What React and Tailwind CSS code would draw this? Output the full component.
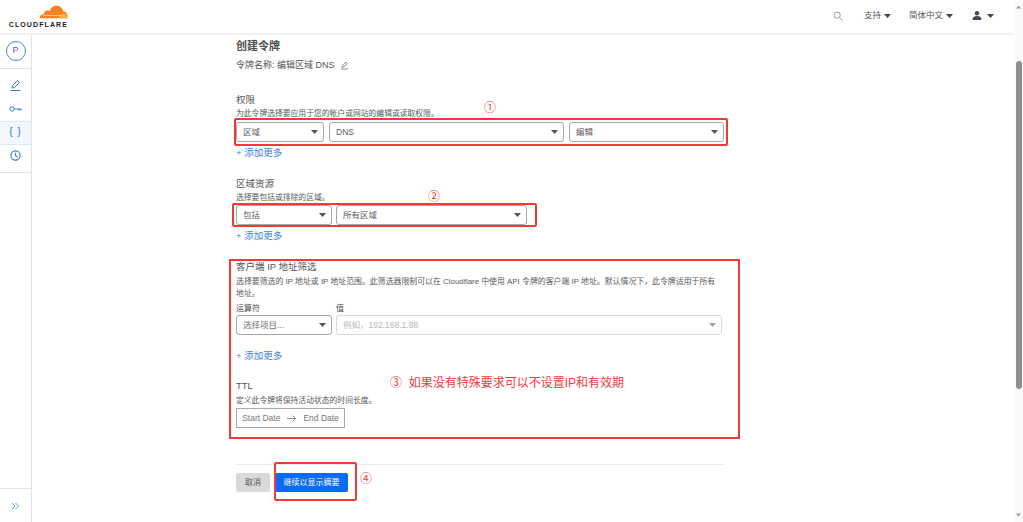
import React from "react";

const font = { fontFamily: '"Liberation Sans","Noto Sans CJK SC",sans-serif' };

function Caret({ className = "" }) {
  return (
    <svg width="7" height="4" viewBox="0 0 7 4" className={className}>
      <path d="M0 0h7L3.5 4z" fill="currentColor" />
    </svg>
  );
}

function Select({ w, label, disabled, muted }) {
  return (
    <div
      className={`${w} h-5 rounded-[3px] border flex items-center justify-between pl-[5px] pr-[5px] shrink-0 ${
        disabled ? "border-[#d9d9d9]" : "border-[#a8a8a8]"
      }`}
    >
      <span className={`text-[8.5px] ${disabled ? "text-[#b4b4b4] pl-[1px]" : muted ? "text-[#6f6f6f] pl-[1px]" : "text-[#5c5c5c] pl-[1px]"}`}>{label}</span>
      <Caret className={disabled ? "text-[#a0a0a0]" : "text-[#555555]"} />
    </div>
  );
}

function AddMore({ className = "" }) {
  return <div className={`h-3 leading-3 text-[9.5px] text-[#3d82d6] ${className}`}>+ 添加更多</div>;
}

function Heading({ children, className = "" }) {
  return <div className={`h-3 leading-3 text-[9.5px] text-[#555555] ${className}`}>{children}</div>;
}

function Desc({ children, className = "" }) {
  return <div className={`h-[10px] leading-[10px] text-[7.8px] text-[#5a5a5a] whitespace-nowrap ${className}`}>{children}</div>;
}

function Logo() {
  return (
    <div className="flex flex-col items-end w-[60px] mt-[3px]">
      <svg width="29" height="14" viewBox="0 0 30 14">
        <path d="M0.5 13.5c.2-2.600 2-4.200 4.500-4.400C6 5 9.500 4.600 11 6c1-3.800 4.500-6 8-5.500 3 .4 5.400 2.600 6 5.600 2.400.2 4.200 1.600 4.500 4.200.1 1.100 0 2.200-.2 3.200z" fill="#f6821f" />
        <path d="M21 13.500c.5-2 1.100-3.800 3-4.600 1.500-.6 3.500-.2 5 .6.4 1.300.5 2.700.3 4z" fill="#fbad41" />
        <path d="M4 10.700h19" stroke="#fff" strokeWidth=".6" />
      </svg>
      <div className="text-[7px] font-bold tracking-[1.1px] leading-[8px] text-[#222222] mt-[2px] whitespace-nowrap">CLOUDFLARE</div>
    </div>
  );
}

function NavIcon({ children, active }) {
  return (
    <div className={`h-[23.5px] flex items-center justify-center ${active ? "bg-[#f3f7fd] border-y border-[#dbe7f6]" : ""}`}>
      {children}
    </div>
  );
}

function Overlay({ className }) {
  return <div className={`absolute border-2 border-[#f03a3a] ${className}`} />;
}

function Mark({ className, children }) {
  return <div className={`absolute text-[#ef3b3b] text-[12px] leading-[14px] whitespace-nowrap ${className}`}>{children}</div>;
}

export default function App() {
  return (
    <div style={font} className="relative h-[522px] w-[1023px] overflow-hidden bg-white flex">
      <div className="flex-1 flex flex-col min-w-0">
        <header className="h-[35px] shrink-0 border-b-2 border-[#f1f1f1] flex items-center pr-[20px] pl-[8px] pb-[2px]">
          <Logo />
          <div className="flex-1" />
          <svg width="10" height="10" viewBox="0 0 24 24" fill="none" stroke="#8a8a8a" strokeWidth="2" className="mr-[21px]">
            <circle cx="10" cy="10" r="7.500" />
            <path d="M16 16l7 7" />
          </svg>
          <span className="text-[8.5px] text-[#555555]">支持</span>
          <Caret className="text-[#444444] ml-[3px] mr-[18px]" />
          <span className="text-[8.5px] text-[#555555]">简体中文</span>
          <Caret className="text-[#444444] ml-[3px] mr-[19px]" />
          <svg width="10" height="9" viewBox="0 0 10 9" className="mr-[5px]">
            <circle cx="5" cy="2.200" r="2.200" fill="#444a55" />
            <path d="M0.500 9c0-3 1.500-4 4.500-4s4.500 1 4.500 4z" fill="#444a55" />
          </svg>
          <Caret className="text-[#444444]" />
        </header>

        <div className="flex-1 flex min-h-0">
          <aside className="w-[32px] shrink-0 border-r border-[#e3e3e3] flex flex-col">
            <div className="h-[34px] border-b border-[#e3e3e3] flex items-center justify-center pb-[1px]">
              <div className="w-[20px] h-[20px] rounded-full border border-[#4c86d8] flex items-center justify-center text-[9px] text-[#3f6fb5]">P</div>
            </div>
            <div className="pt-[5px] border-b border-[#e3e3e3] pb-[5px] h-[104px]">
              <NavIcon>
                <svg width="13" height="13" viewBox="0 0 13 13" fill="none" stroke="#3d7bd0" strokeWidth="1">
                  <path d="M3 9l.5-2.500L8.500 1.500l2 2-5 5z" />
                  <path d="M1.500 11.500h10" />
                </svg>
              </NavIcon>
              <NavIcon>
                <svg width="13" height="8" viewBox="0 0 13 8" fill="none" stroke="#3d7bd0" strokeWidth="1">
                  <circle cx="3" cy="4" r="2.200" />
                  <path d="M5.200 4h7.300M10 4v2M12 4v1.500" />
                </svg>
              </NavIcon>
              <NavIcon active>
                <span className="text-[10px] font-medium text-[#2f6fc9] tracking-[1px] -mt-[2px]">{"{ }"}</span>
              </NavIcon>
              <NavIcon>
                <svg width="11" height="11" viewBox="0 0 11 11" fill="none" stroke="#3d7bd0" strokeWidth="1.100" className="-mt-[2px]">
                  <circle cx="5.500" cy="5.500" r="4.600" />
                  <path d="M5.500 2.800v3l2 1.200" />
                </svg>
              </NavIcon>
            </div>
            <div className="flex-1" />
            <div className="h-[34px] border-t border-[#e3e3e3] flex items-center justify-center">
              <svg width="9" height="8" viewBox="0 0 9 8" fill="none" stroke="#6d9fe6" strokeWidth="1">
                <path d="M1 1l3 3-3 3M4.500 1l3 3-3 3" />
              </svg>
            </div>
          </aside>

          <main className="flex-1 pl-[204px] min-w-0">
            <div className="w-[488px]">
              <div className="mt-[4px] h-[14px] leading-[14px] text-[11px] font-semibold text-[#4d4d4d]">创建令牌</div>
              <div className="mt-[6px] h-3 leading-3 text-[9px] text-[#555555] flex items-center gap-[5px]">
                令牌名称: 编辑区域 DNS
                <svg width="9" height="9" viewBox="0 0 13 13" fill="none" stroke="#555555" strokeWidth="1">
                  <path d="M3 9l.5-2.500L8.500 1.500l2 2-5 5z" />
                  <path d="M1.500 11.500h10" />
                </svg>
              </div>

              <Heading className="mt-[23px]">权限</Heading>
              <Desc className="mt-[3px]">为此令牌选择要应用于您的帐户或网站的编辑或读取权限。</Desc>
              <div className="mt-[3px] flex gap-[5px]">
                <Select w="w-[88px]" label="区域" />
                <Select w="w-[235px]" label="DNS" />
                <Select w="w-[155px]" label="编辑" />
              </div>
              <AddMore className="mt-[5px]" />

              <Heading className="mt-[19px]">区域资源</Heading>
              <Desc className="mt-[3px]">选择要包括或排除的区域。</Desc>
              <div className="mt-[2px] flex gap-[4px]">
                <Select w="w-[96px]" label="包括" />
                <Select w="w-[191px]" label="所有区域" />
              </div>
              <AddMore className="mt-[5px]" />

              <Heading className="mt-[19px]">客户端 IP 地址筛选</Heading>
              <Desc className="mt-[3px] !whitespace-normal !leading-[12px] h-[24px] pr-[6px] !text-[7.9px]">
                选择要筛选的 IP 地址或 IP 地址范围。此筛选器限制可以在 Cloudflare 中使用 API 令牌的客户端 IP 地址。默认情况下，此令牌适用于所有地址。
              </Desc>
              <div className="flex mt-[4px] text-[8px] text-[#4d4d4d] h-[10px] leading-[10px]">
                <div className="w-[100px]">运算符</div>
                <div>值</div>
              </div>
              <div className="mt-[1px] flex gap-[4px]">
                <Select w="w-[96px]" label="选择项目..." muted />
                <Select w="w-[386px]" label="例如，192.168.1.88" disabled />
              </div>
              <AddMore className="mt-[15px]" />

              <Heading className="mt-[18px]">TTL</Heading>
              <Desc className="mt-[4px]">定义此令牌将保持活动状态的时间长度。</Desc>
              <div className="mt-[2px] w-[109px] h-[20px] border border-[#a8a8a8] flex items-center justify-center gap-[7px] text-[8.5px] text-[#777777] whitespace-nowrap">
                <span>Start Date</span>
                <svg width="9" height="7" viewBox="0 0 9 7" fill="none" stroke="#777777" strokeWidth=".8">
                  <path d="M0 3.500h8.500M5.500 .5l3 3-3 3" />
                </svg>
                <span>End Date</span>
              </div>

              <div className="mt-[36px] border-t border-[#ececec]" />
              <div className="mt-[8px] flex gap-[5px]">
                <div className="w-[34px] h-[19px] rounded-[2px] bg-[#d9d9d9] text-[#555555] text-[8px] flex items-center justify-center">取消</div>
                <div className="w-[73px] h-[19px] rounded-[2px] bg-[#0a6cf5] text-white text-[8px] flex items-center justify-center">继续以显示摘要</div>
              </div>
            </div>
          </main>
        </div>
      </div>

      <div className="w-[9px] shrink-0 bg-[#fafafa] flex flex-col items-center relative">
        <Caret className="text-[#9a9a9a] mt-[5px] w-[5px] rotate-180" />
        <div className="mt-[52px] w-[6px] h-[328px] rounded-[3px] bg-[#8e8e8e]" />
        <div className="flex-1" />
        <Caret className="text-[#9a9a9a] mb-[5px] w-[5px]" />
      </div>

      <Overlay className="left-[234px] top-[118px] w-[494px] h-[28px] rounded-[2px]" />
      <Overlay className="left-[232px] top-[203px] w-[305px] h-[24px] rounded-[2px]" />
      <Overlay className="left-[229px] top-[259px] w-[511px] h-[180px]" />
      <Overlay className="left-[274px] top-[462px] w-[83px] h-[39px] rounded-[2px]" />

      <Mark className="left-[484px] top-[101px]">①</Mark>
      <Mark className="left-[428px] top-[190px]">②</Mark>
      <Mark className="left-[390px] top-[376px]">③&nbsp;&nbsp;如果没有特殊要求可以不设置IP和有效期</Mark>
      <Mark className="left-[360px] top-[472px]">④</Mark>
    </div>
  );
}
